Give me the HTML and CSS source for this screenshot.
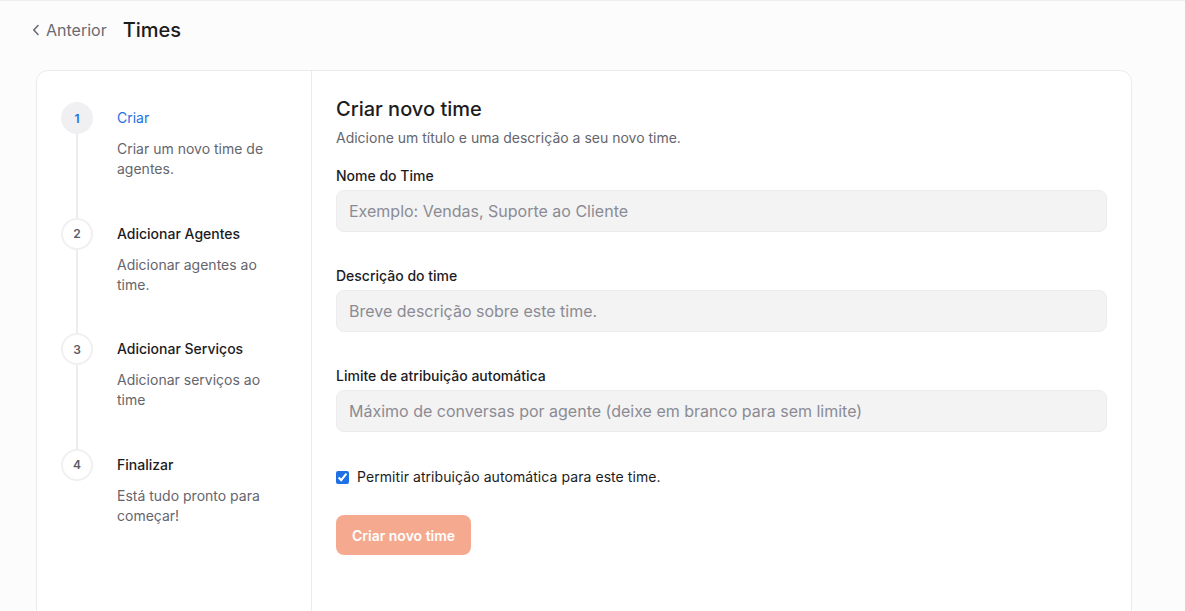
FILE: index.html
```html
<!DOCTYPE html>
<html lang="pt-BR">
<head>
<meta charset="utf-8">
<title>Times</title>
<link rel="stylesheet" href="styles.css">
</head>
<body>
<div class="page">
  <header class="topbar">
    <a class="back" href="#">
      <svg class="chev" width="8" height="12" viewBox="0 0 8 12" fill="none"><path d="M6 1.5L1.8 6L6 10.5" stroke="currentColor" stroke-width="1.6" stroke-linecap="round" stroke-linejoin="round"/></svg>
      <span>Anterior</span>
    </a>
    <h1 class="page-title">Times</h1>
  </header>

  <section class="card">
    <aside class="steps">
      <div class="step active">
        <div class="rail"><span class="num">1</span><span class="line"></span></div>
        <div class="step-body">
          <div class="step-title">Criar</div>
          <div class="step-desc">Criar um novo time de agentes.</div>
        </div>
      </div>
      <div class="step">
        <div class="rail"><span class="num">2</span><span class="line"></span></div>
        <div class="step-body">
          <div class="step-title">Adicionar Agentes</div>
          <div class="step-desc">Adicionar agentes ao time.</div>
        </div>
      </div>
      <div class="step">
        <div class="rail"><span class="num">3</span><span class="line"></span></div>
        <div class="step-body">
          <div class="step-title">Adicionar Serviços</div>
          <div class="step-desc">Adicionar serviços ao time</div>
        </div>
      </div>
      <div class="step last">
        <div class="rail"><span class="num">4</span></div>
        <div class="step-body">
          <div class="step-title">Finalizar</div>
          <div class="step-desc">Está tudo pronto para começar!</div>
        </div>
      </div>
    </aside>

    <div class="form">
      <h2 class="form-title">Criar novo time</h2>
      <p class="form-sub">Adicione um título e uma descrição a seu novo time.</p>

      <div class="field">
        <label class="label">Nome do Time</label>
        <input class="input" type="text" placeholder="Exemplo: Vendas, Suporte ao Cliente">
      </div>
      <div class="field">
        <label class="label">Descrição do time</label>
        <input class="input" type="text" placeholder="Breve descrição sobre este time.">
      </div>
      <div class="field">
        <label class="label">Limite de atribuição automática</label>
        <input class="input" type="text" placeholder="Máximo de conversas por agente (deixe em branco para sem limite)">
      </div>

      <label class="check">
        <input type="checkbox" checked>
        <span>Permitir atribuição automática para este time.</span>
      </label>

      <button class="btn" type="button">Criar novo time</button>
    </div>
  </section>
</div>
</body>
</html>
```

FILE: styles.css
```css
* { box-sizing: border-box; }
html, body { margin: 0; padding: 0; }
body {
  background: #fcfcfc;
  font-family: Inter, "Noto Sans", "Liberation Sans", sans-serif;
  color: #1c1c1f;
  border-top: 1px solid #eeeeef;
  overflow: hidden;
}
.page { padding: 0 0 0 36px; }
.topbar {
  height: 57px;
  display: flex;
  align-items: center;
  gap: 16px;
  margin-left: -4px;
}
.back {
  display: flex;
  align-items: center;
  gap: 6px;
  color: #6a6a72;
  text-decoration: none;
  font-size: 16px;
  line-height: 24px;
}
.chev { color: #6a6a72; margin-top: 1px; }
.page-title {
  margin: 0;
  font-size: 20px;
  font-weight: 500;
  line-height: 28px;
  color: #1c1c1f;
}
.card {
  margin-top: 12px;
  width: 1096px;
  min-height: 620px;
  border: 1px solid #ebebed;
  border-radius: 12px;
  background: #ffffff;
  display: grid;
  grid-template-columns: 275px 1fr;
}
.steps {
  border-right: 1px solid #ebebed;
  padding: 31px 24px 0 24px;
}
.step { display: flex; gap: 24px; }
.rail {
  display: flex;
  flex-direction: column;
  align-items: center;
  width: 32px;
  flex: none;
}
.num {
  width: 32px;
  height: 32px;
  border-radius: 50%;
  border: 2px solid #f0f0f2;
  background: #ffffff;
  display: flex;
  align-items: center;
  justify-content: center;
  font-size: 12px;
  font-weight: 600;
  color: #5c5c66;
  flex: none;
}
.step.active .num {
  background: #f0f0f3;
  border-color: #f0f0f3;
  color: #1f6fe5;
}
.line { flex: 1; width: 2px; background: #ededef; }
.step-body { padding-bottom: 38.5px; }
.step.last .step-body { padding-bottom: 0; }
.step-title {
  font-size: 14px;
  font-weight: 500;
  line-height: 32px;
  color: #1c1c1f;
}
.step.active .step-title { color: #1f6fe5; font-weight: 400; }
.step-desc {
  margin-top: 5px;
  font-size: 14px;
  line-height: 20px;
  color: #65656d;
  width: 160px;
}
.form { padding: 25px 24px 0 24px; }
.form-title {
  margin: 0;
  font-size: 20px;
  font-weight: 500;
  line-height: 26px;
  color: #1c1c1f;
}
.form-sub {
  margin: 6px 0 0;
  font-size: 14px;
  line-height: 20px;
  color: #65656d;
}
.field { margin-top: 18px; display: flex; flex-direction: column; }
.field + .field { margin-top: 34px; }
.label {
  font-size: 14px;
  font-weight: 500;
  line-height: 20px;
  color: #1c1c1f;
  margin-bottom: 4px;
}
.input {
  height: 42px;
  width: 100%;
  border: 1px solid #ececee;
  border-radius: 8px;
  background: #f3f3f4;
  padding: 0 12px;
  font-family: inherit;
  font-size: 16px;
  color: #1c1c1f;
  outline: none;
}
.input::placeholder { color: #8b8b93; }
.check {
  margin-top: 35px;
  display: flex;
  align-items: center;
  gap: 8px;
  font-size: 14px;
  line-height: 20px;
  color: #1c1c1f;
  letter-spacing: 0.005em;
}
.check input {
  margin: 0;
  width: 13px;
  height: 13px;
  accent-color: #1f6fe5;
}
.btn {
  margin-top: 28px;
  height: 40px;
  padding: 0 16px;
  border: none;
  border-radius: 8px;
  background: #f5aa90;
  color: #ffffff;
  font-family: inherit;
  font-size: 14px;
  font-weight: 600;
  cursor: not-allowed;
}
```
